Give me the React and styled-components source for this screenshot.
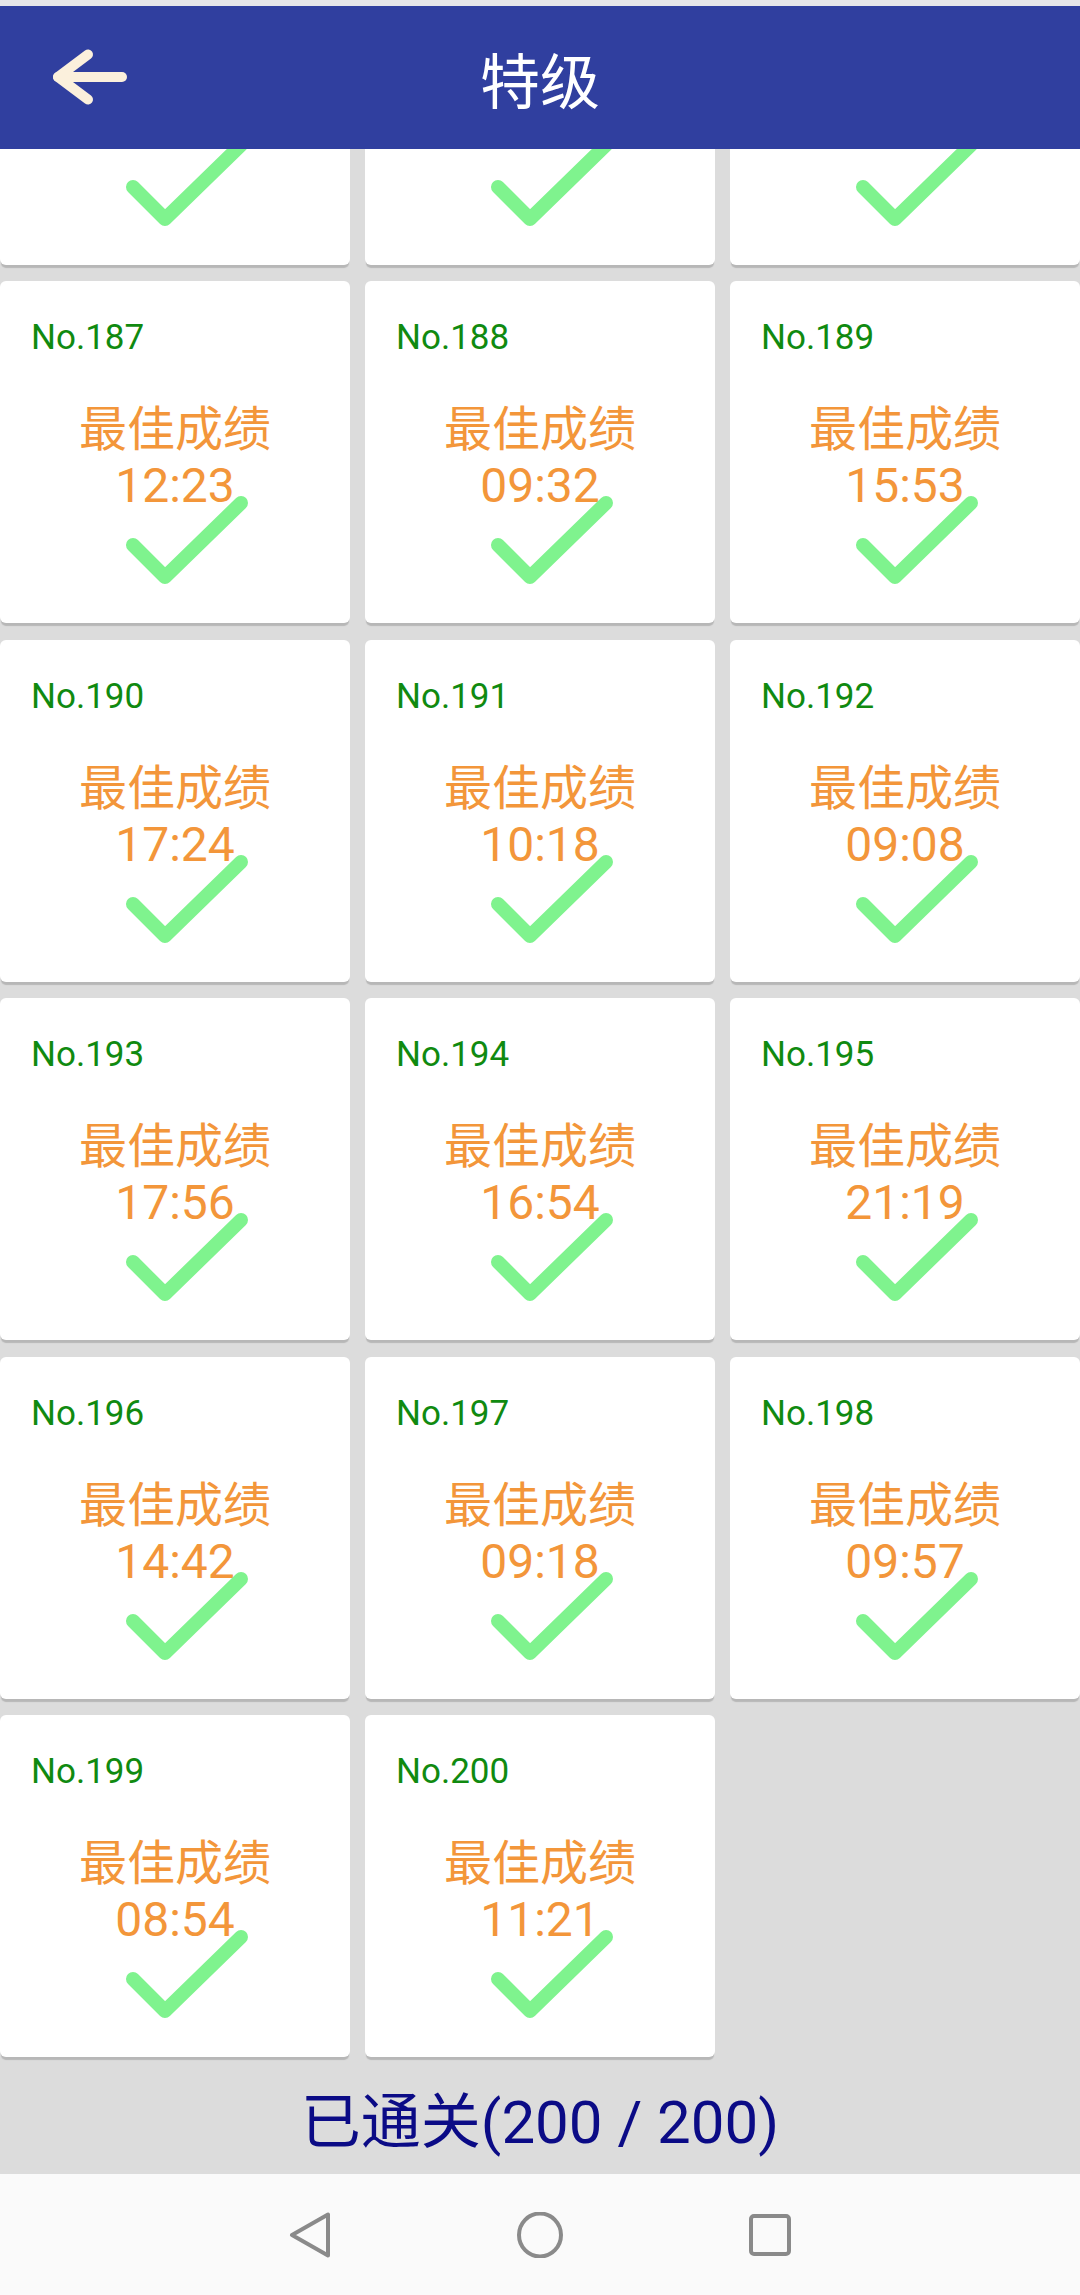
import React from 'react';
import styled, { createGlobalStyle } from 'styled-components';

const levels = [
  { no: 184, time: '13:05' },
  { no: 185, time: '10:47' },
  { no: 186, time: '12:11' },
  { no: 187, time: '12:23' },
  { no: 188, time: '09:32' },
  { no: 189, time: '15:53' },
  { no: 190, time: '17:24' },
  { no: 191, time: '10:18' },
  { no: 192, time: '09:08' },
  { no: 193, time: '17:56' },
  { no: 194, time: '16:54' },
  { no: 195, time: '21:19' },
  { no: 196, time: '14:42' },
  { no: 197, time: '09:18' },
  { no: 198, time: '09:57' },
  { no: 199, time: '08:54' },
  { no: 200, time: '11:21' },
];

const GlobalStyle = createGlobalStyle`
  html, body {
    margin: 0;
    padding: 0;
    background: #dcdcdc;
  }
  * {
    box-sizing: border-box;
  }
`;

const App = () => {
  return (
    <>
      <GlobalStyle />
      <Screen>
        <StatusStrip />
        <Toolbar>
          <BackSlot>
            <svg width="84" height="64" viewBox="0 0 84 64">
              <g fill="none" stroke="#fbf0dc" strokeWidth="10" strokeLinecap="round" strokeLinejoin="round">
                <path d="M10 31 L74 31" />
                <path d="M40 8.5 L10 31 L40 53.5" />
              </g>
            </svg>
          </BackSlot>
          <Title>特级</Title>
          <span />
        </Toolbar>

        <Viewport>
          <Grid>
            {levels.map((lv) => (
              <Card key={lv.no}>
                <LevelNo>No.{lv.no}</LevelNo>
                <Best>
                  最佳成绩
                  <br />
                  {lv.time}
                </Best>
                <Check width="134" height="98" viewBox="0 0 134 98">
                  <path
                    d="M13 54 L45 86 L121 12"
                    fill="none"
                    stroke="#7ff38e"
                    strokeWidth="14"
                    strokeLinecap="round"
                    strokeLinejoin="round"
                  />
                </Check>
              </Card>
            ))}
          </Grid>
        </Viewport>

        <Footer>已通关(200 / 200)</Footer>

        <NavBar>
          <svg width="46" height="46" viewBox="0 0 46 46">
            <path d="M5 23 L41 2.5 L41 43.5 Z" fill="none" stroke="#8a8a8a" strokeWidth="4" strokeLinejoin="round" />
          </svg>
          <svg width="46" height="46" viewBox="0 0 46 46">
            <ellipse cx="23" cy="23" rx="21" ry="21.5" fill="none" stroke="#8a8a8a" strokeWidth="4" />
          </svg>
          <svg width="46" height="46" viewBox="0 0 46 46">
            <rect x="4" y="4" width="38" height="38" rx="3" fill="none" stroke="#8a8a8a" strokeWidth="4" />
          </svg>
        </NavBar>
      </Screen>
    </>
  );
};

const Screen = styled.div`
  width: 1080px;
  height: 2295px;
  display: flex;
  flex-direction: column;
  overflow: hidden;
  background: #dcdcdc;
`;

const StatusStrip = styled.div`
  height: 6px;
  flex: none;
  background: #e6e6ea;
`;

const Toolbar = styled.header`
  height: 143px;
  flex: none;
  display: grid;
  grid-template-columns: 1fr auto 1fr;
  align-items: center;
  background: #303f9f;
  position: relative;
  z-index: 2;
`;

const BackSlot = styled.div`
  display: flex;
  align-items: center;
  padding-left: 48px;
  height: 64px;
`;

const Title = styled.h1`
  margin: 0;
  color: #ffffff;
  font-family: "Noto Sans CJK SC", Roboto, sans-serif;
  font-weight: 400;
  font-size: 60px;
  line-height: 60px;
`;

const Viewport = styled.div`
  flex: 1;
  min-height: 0;
  overflow: hidden;
`;

const Grid = styled.div`
  margin-top: -226.5px;
  display: grid;
  grid-template-columns: repeat(3, 350px);
  column-gap: 15px;
  row-gap: 16.5px;
`;

const Card = styled.div`
  position: relative;
  height: 342px;
  padding: 37px 0 0 31px;
  background: #ffffff;
  border-radius: 6px;
  box-shadow: 0 4px 1px -1px rgba(0, 0, 0, 0.17);
`;

const LevelNo = styled.div`
  color: #108a10;
  font-family: Roboto, "Noto Sans", sans-serif;
  font-size: 35px;
  line-height: 40px;
`;

const Best = styled.div`
  margin: 44px 0 0 -31px;
  text-align: center;
  color: #f3963a;
  font-family: Roboto, "Noto Sans CJK SC", sans-serif;
  font-size: 48px;
  line-height: 56px;
`;

const Check = styled.svg`
  position: absolute;
  left: 120px;
  top: 210px;
`;

const Footer = styled.div`
  height: 111px;
  flex: none;
  display: flex;
  align-items: center;
  justify-content: center;
  padding-top: 8px;
  color: #0b0b86;
  font-family: Roboto, "Noto Sans CJK SC", sans-serif;
  font-size: 60px;
  line-height: 60px;
`;

const NavBar = styled.nav`
  height: 121px;
  flex: none;
  display: flex;
  align-items: center;
  justify-content: center;
  gap: 184px;
  background: #fafafa;
`;

export default App;
